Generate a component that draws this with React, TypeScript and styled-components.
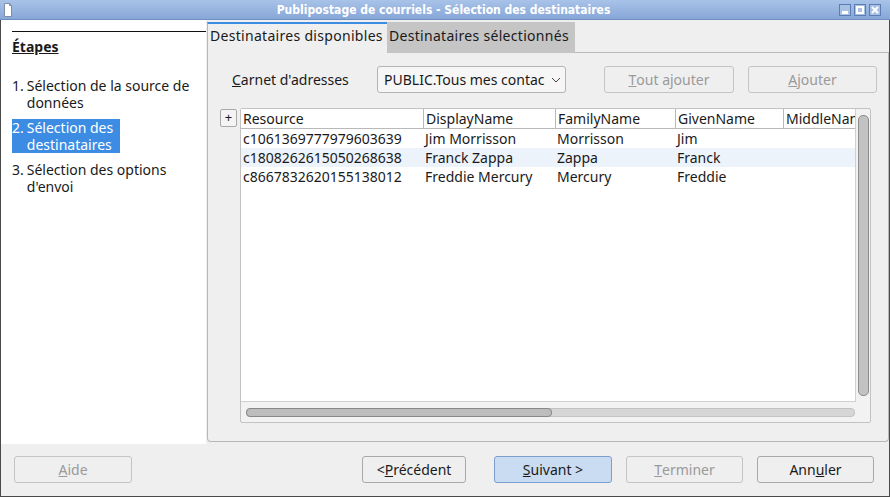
import * as React from 'react';
import styled, { createGlobalStyle } from 'styled-components';

const GlobalStyle = createGlobalStyle`
  html, body {
    margin: 0;
    padding: 0;
    overflow: hidden;
    background: #efefef;
  }
`;

const UI_FONT = `"Noto Sans", "Open Sans", sans-serif`;

const Window = styled.div`
  width: 890px;
  height: 497px;
  box-sizing: border-box;
  display: flex;
  flex-direction: column;
  border: 1px solid #4a4a4a;
  border-top: 0;
  background: #efefef;
  font-family: ${UI_FONT};
  font-size: 14px;
  color: #1a1a1a;
`;

const TitleBar = styled.div`
  height: 20px;
  flex: none;
  display: flex;
  align-items: center;
  padding: 0 9px 0 4px;
  box-sizing: border-box;
  background: linear-gradient(#a9c3e8, #86a7d8);
  border-bottom: 1px solid #6f8fc0;
  margin: 0 -1px;
`;

const TitleText = styled.div`
  flex: 1;
  text-align: center;
  color: #fff;
  font-family: "DejaVu Sans Condensed", "DejaVu Sans", sans-serif;
  font-weight: bold;
  font-size: 12px;
  padding-left: 36px;
`;

const WinButtons = styled.div`
  display: flex;
  gap: 3px;
`;

const WinButton = styled.div`
  width: 10px;
  height: 10px;
  border: 1px solid #5b7db1;
  background: #a8c0e3;
  display: flex;
  align-items: center;
  justify-content: center;
`;

const Main = styled.div`
  flex: 1;
  display: flex;
  min-height: 0;
`;

const Sidebar = styled.div`
  width: 205px;
  flex: none;
  background: #fff;
  padding: 11px 0 0 11px;
  box-sizing: border-box;
`;

const StepsHeader = styled.div`
  border-top: 1px solid #111;
  padding-top: 5px;
  font-weight: bold;
  text-decoration: underline;
  height: 40px;
`;

const StepList = styled.div`
  display: flex;
  flex-direction: column;
  align-items: flex-start;
  gap: 8px;
`;

const Step = styled.div<{ $active?: boolean }>`
  display: inline-grid;
  grid-template-columns: auto auto;
  column-gap: 3px;
  line-height: 17px;
  padding: 0 7px 0 0;
  background: ${p => (p.$active ? '#3c8ce3' : 'transparent')};
  color: ${p => (p.$active ? '#fff' : '#1a1a1a')};
`;

const StepNum = styled.span``;
const StepLabel = styled.span``;

const Content = styled.div`
  flex: 1;
  min-width: 0;
  display: flex;
  flex-direction: column;
  padding: 2px 0 2px 1px;
`;

const TabBar = styled.div`
  display: flex;
  align-items: flex-start;
  height: 31px;
  flex: none;
`;

const Tab = styled.div<{ $active?: boolean; $w: number }>`
  box-sizing: border-box;
  width: ${p => p.$w}px;
  padding: 0 0 0 2px;
  height: ${p => (p.$active ? '32px' : '31px')};
  line-height: 24px;
  white-space: nowrap;
  background: ${p => (p.$active ? '#efefef' : '#c5c5c5')};
  border-top: 2px solid ${p => (p.$active ? '#3c8ce3' : '#c5c5c5')};
  border-left: ${p => (p.$active ? '1px solid #b8b8b8' : '0')};
  letter-spacing: 0.3px;
  position: relative;
  z-index: 1;
`;

const TabFill = styled.div`
  flex: 1;
  align-self: stretch;
  border-bottom: 1px solid #b8b8b8;
`;

const Panel = styled.div`
  flex: 1;
  min-width: 0;
  border: 1px solid #b8b8b8;
  border-top: 0;
  border-radius: 0 0 4px 4px;
  display: flex;
  flex-direction: column;
  padding: 13px 11px 18px 12px;
  min-height: 0;
`;

const Toolbar = styled.div`
  display: flex;
  align-items: center;
  height: 27px;
  padding-left: 12px;
  gap: 14px;
`;

const Label = styled.div`
  width: 131px;
`;

const Combo = styled.div`
  width: 189px;
  height: 27px;
  box-sizing: border-box;
  border: 1px solid #b4b4b4;
  border-radius: 3px;
  background: #f6f6f6;
  display: flex;
  align-items: center;
  padding: 0 4px 0 6px;
  overflow: hidden;
  white-space: nowrap;
`;

const ComboText = styled.span`
  flex: 1;
  overflow: hidden;
`;

const Spacer = styled.div`
  flex: 1;
`;

const Button = styled.div<{ $w: number; $disabled?: boolean; $default?: boolean }>`
  width: ${p => p.$w}px;
  flex: none;
  height: 27px;
  box-sizing: border-box;
  border: 1px solid ${p => (p.$default ? '#7b9fcf' : p.$disabled ? '#c4c4c4' : '#a9a9a9')};
  border-radius: 3px;
  background: ${p => (p.$default ? '#c9dcf1' : '#efefef')};
  color: ${p => (p.$disabled ? '#9a9a9a' : '#1a1a1a')};
  display: flex;
  align-items: center;
  justify-content: center;
  white-space: nowrap;
`;

const U = styled.span`
  text-decoration: underline;
`;

const TableArea = styled.div`
  flex: 1;
  display: flex;
  align-items: flex-start;
  margin-top: 15px;
  padding-right: 6px;
  min-height: 0;
  gap: 3px;
`;

const PlusButton = styled.div`
  width: 17px;
  height: 18px;
  flex: none;
  box-sizing: border-box;
  border: 1px solid #a9a9a9;
  border-radius: 2px;
  background: #f4f4f4;
  font-size: 13px;
  line-height: 15px;
  text-align: center;
  margin-top: 1px;
`;

const Table = styled.div`
  flex: 1;
  min-width: 0;
  align-self: stretch;
  border: 1px solid #c2c2c2;
  border-radius: 2px;
  display: flex;
  flex-direction: column;
  min-height: 0;
  background: #f2f2f2;
`;

const TableBody = styled.div`
  flex: 1;
  display: flex;
  min-height: 0;
`;

const Grid = styled.div`
  flex: 1;
  min-width: 0;
  background: #fff;
  overflow: hidden;
  border-right: 1px solid #d0d0d0;
  border-bottom: 1px solid #d0d0d0;
`;

const Row = styled.div<{ $header?: boolean; $alt?: boolean }>`
  display: grid;
  grid-template-columns: 182px 132px 120px 108px 100px;
  height: 19px;
  line-height: 19px;
  background: ${p => (p.$alt ? '#edf3fb' : '#fff')};
  border-bottom: ${p => (p.$header ? '1px solid #b9b9b9' : '0')};
`;

const Cell = styled.div<{ $header?: boolean }>`
  padding-left: 2px;
  white-space: nowrap;
  overflow: hidden;
  border-left: ${p => (p.$header ? '1px solid #b9b9b9' : '0')};
  &:first-child {
    border-left: 0;
  }
`;

const VScroll = styled.div`
  width: 14px;
  flex: none;
  display: flex;
  justify-content: center;
  padding: 6px 0 6px;
`;

const VThumb = styled.div`
  width: 9px;
  background: #c2c2c2;
  border: 1px solid #8d8d8d;
  border-radius: 5px;
`;

const HScroll = styled.div`
  height: 20px;
  flex: none;
  display: flex;
  align-items: center;
  padding: 0 15px 0 5px;
`;

const HTrack = styled.div`
  flex: 1;
  height: 7px;
  background: #d6d6d6;
  border: 1px solid #c2c2c2;
  border-radius: 4px;
  display: flex;
`;

const HThumb = styled.div`
  background: #bdbdbd;
  border: 1px solid #888;
  border-radius: 4px;
  margin: -1px;
`;

const Footer = styled.div`
  height: 50px;
  flex: none;
  display: flex;
  align-items: center;
  padding: 0 15px 2px 13px;
`;

const ButtonGroup = styled.div`
  display: flex;
  gap: 14px;
  margin-left: 28px;
`;

const columns = ['Resource', 'DisplayName', 'FamilyName', 'GivenName', 'MiddleName'];

const rows = [
  ['c1061369777979603639', 'Jim Morrisson', 'Morrisson', 'Jim', ''],
  ['c1808262615050268638', 'Franck Zappa', 'Zappa', 'Franck', ''],
  ['c8667832620155138012', 'Freddie Mercury', 'Mercury', 'Freddie', ''],
];

const DocIcon = () => (
  <svg width="8" height="14" viewBox="0 0 8 14">
    <path d="M0.5 0.5 H5.5 L7.5 2.5 V13.5 H0.5 Z" fill="#fff" stroke="#7d8ea8" />
    <path d="M5.5 0.5 V2.5 H7.5" fill="none" stroke="#7d8ea8" />
  </svg>
);

export default function App() {
  return (
    <>
      <GlobalStyle />
      <Window>
        <TitleBar>
          <DocIcon />
          <TitleText>Publipostage de courriels - Sélection des destinataires</TitleText>
          <WinButtons>
            <WinButton>
              <svg width="8" height="8"><rect x="1" y="5" width="6" height="3" fill="#fff" /></svg>
            </WinButton>
            <WinButton>
              <svg width="8" height="8"><rect x="1" y="1" width="6" height="6" fill="none" stroke="#fff" strokeWidth="2" /></svg>
            </WinButton>
            <WinButton>
              <svg width="8" height="8"><path d="M1 1 L7 7 M7 1 L1 7" stroke="#fff" strokeWidth="2" /></svg>
            </WinButton>
          </WinButtons>
        </TitleBar>
        <Main>
          <Sidebar>
            <StepsHeader>Étapes</StepsHeader>
            <StepList>
              <Step>
                <StepNum>1.</StepNum>
                <StepLabel>Sélection de la source de<br />données</StepLabel>
              </Step>
              <Step $active>
                <StepNum>2.</StepNum>
                <StepLabel>Sélection des<br />destinataires</StepLabel>
              </Step>
              <Step>
                <StepNum>3.</StepNum>
                <StepLabel>Sélection des options<br />d'envoi</StepLabel>
              </Step>
            </StepList>
          </Sidebar>
          <Content>
            <TabBar>
              <Tab $active $w={180}>Destinataires disponibles</Tab>
              <Tab $w={188}>Destinataires sélectionnés</Tab>
              <TabFill />
            </TabBar>
            <Panel>
              <Toolbar>
                <Label><U>C</U>arnet d'adresses</Label>
                <Combo>
                  <ComboText>PUBLIC.Tous mes contac</ComboText>
                  <svg width="10" height="6" viewBox="0 0 10 6">
                    <path d="M1 1 L5 5 L9 1" fill="none" stroke="#444" strokeWidth="1" />
                  </svg>
                </Combo>
                <Spacer />
                <Button $w={130} $disabled><U>T</U>out ajouter</Button>
                <Button $w={129} $disabled><U>A</U>jouter</Button>
              </Toolbar>
              <TableArea>
                <PlusButton>+</PlusButton>
                <Table>
                  <TableBody>
                    <Grid>
                      <Row $header>
                        {columns.map(c => (
                          <Cell $header key={c}>{c}</Cell>
                        ))}
                      </Row>
                      {rows.map((r, i) => (
                        <Row key={r[0]} $alt={i === 1}>
                          {r.map((v, j) => (
                            <Cell key={j}>{v}</Cell>
                          ))}
                        </Row>
                      ))}
                    </Grid>
                    <VScroll>
                      <VThumb />
                    </VScroll>
                  </TableBody>
                  <HScroll>
                    <HTrack>
                      <HThumb style={{ width: '50%' }} />
                    </HTrack>
                  </HScroll>
                </Table>
              </TableArea>
            </Panel>
          </Content>
        </Main>
        <Footer>
          <Button $w={118} $disabled><U>A</U>ide</Button>
          <Spacer />
          <Button $w={104}>&lt; <U>P</U>récédent</Button>
          <ButtonGroup>
            <Button $w={118} $default><U>S</U>uivant &gt;</Button>
            <Button $w={117} $disabled><U>T</U>erminer</Button>
            <Button $w={117}>Ann<U>u</U>ler</Button>
          </ButtonGroup>
        </Footer>
      </Window>
    </>
  );
}
